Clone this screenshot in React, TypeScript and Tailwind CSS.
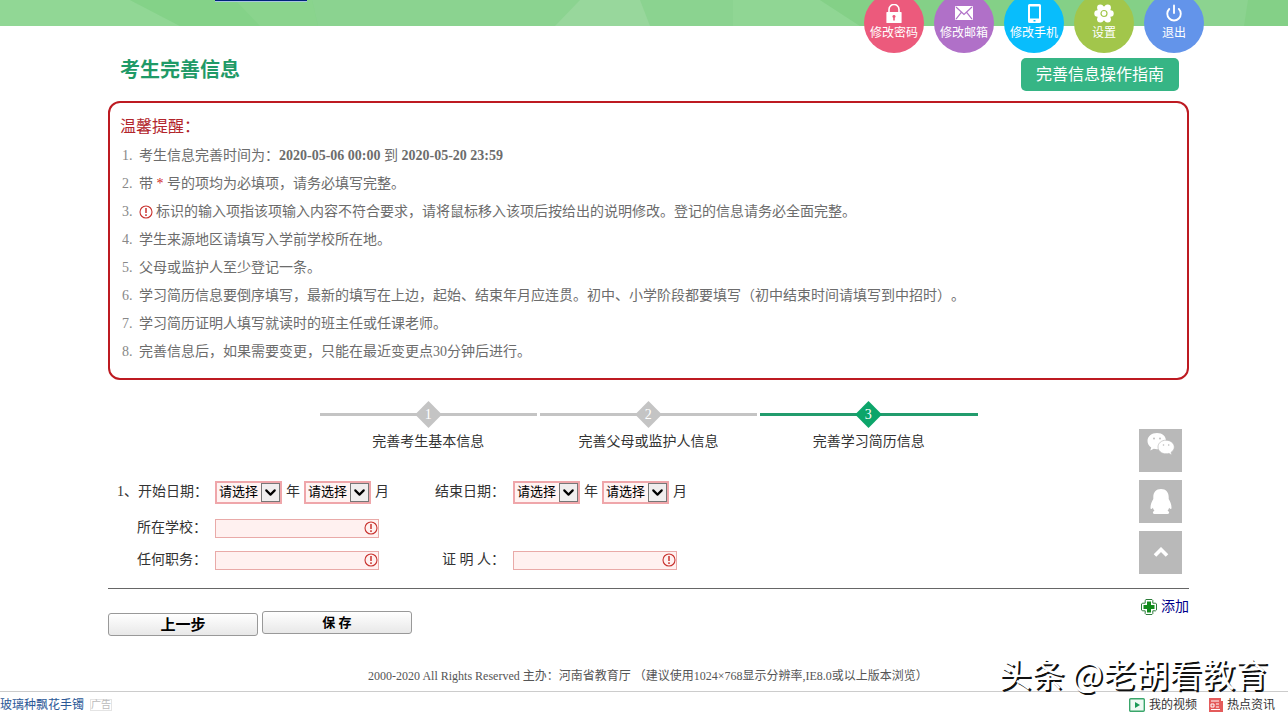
import React from 'react';
import { ChevronDown, Power } from 'lucide-react';

const steps = [
  { no: 1, label: '完善考生基本信息', active: false },
  { no: 2, label: '完善父母或监护人信息', active: false },
  { no: 3, label: '完善学习简历信息', active: true },
];

function BannerArt() {
  return (
    <svg className="absolute inset-0 h-full w-full" viewBox="0 0 1288 26" preserveAspectRatio="none">
      <rect width="1288" height="26" fill="#8bd390" />
      <path fill="#91d795" d="M0 0h130l50 26H0z" />
      <path fill="#84d288" d="M130 0h182l6 26H180z" />
      <path fill="#8ad48d" d="M235 0h77l6 26h-58z" />
      <path fill="#98d79c" d="M580 0h60l10 26h-95z" />
      <path fill="#90d694" d="M733 0h87l40 26H733z" />
      <path fill="#84d087" d="M820 0h468v26H860z" />
      <path fill="#8cd390" d="M1150 0h98l-4 26h-94z" />
    </svg>
  );
}

function LockIcon() {
  return (
    <svg width="16" height="19" viewBox="0 0 16 19" fill="none">
      <path d="M3 9V5.500a5 5 0 0 1 10 0V9" stroke="#fff" strokeWidth="1.600" />
      <path fillRule="evenodd" fill="#fff" d="M1 8h14a.6.6 0 0 1 .6.6v9.800a.6.6 0 0 1-.6.6H1a.6.6 0 0 1-.6-.6V8.600A.6.6 0 0 1 1 8zM8 11a1.500 1.500 0 0 0-.8 2.800V16.500h1.600v-2.700A1.500 1.500 0 0 0 8 11z" />
    </svg>
  );
}

function MailIcon() {
  return (
    <svg width="18" height="14" viewBox="0 0 18 14">
      <rect width="18" height="14" rx="1" fill="#fff" />
      <path d="M1 1l8 7.500L17 1M1 13.200l5.500-7M17 13.200l-5.500-7" fill="none" stroke="#b070c8" strokeWidth="1.200" />
    </svg>
  );
}

function PhoneIcon() {
  return (
    <svg width="13" height="19" viewBox="0 0 13 19">
      <path fillRule="evenodd" fill="#fff" d="M1.500 0h10A1.500 1.500 0 0 1 13 1.500v16a1.500 1.500 0 0 1-1.500 1.500h-10A1.500 1.500 0 0 1 0 17.500v-16A1.500 1.500 0 0 1 1.500 0zM2 2.500v12h9v-12zM5.500 16v1.500h2V16z" />
    </svg>
  );
}

function GearIcon() {
  return (
    <svg width="20" height="19" viewBox="0 0 20 19">
      <g fill="#fff">
        <circle cx="10" cy="9.500" r="7.200" />
        <circle cx="3.500" cy="9.500" r="3.200" />
        <circle cx="16.500" cy="9.500" r="3.200" />
        <circle cx="6.300" cy="3.700" r="3.200" />
        <circle cx="13.700" cy="3.700" r="3.200" />
        <circle cx="6.300" cy="15.300" r="3.200" />
        <circle cx="13.700" cy="15.300" r="3.200" />
      </g>
      <circle cx="10" cy="9.500" r="3" fill="none" stroke="#a2c64b" strokeWidth="1.200" />
    </svg>
  );
}

function WarnIcon() {
  return (
    <svg width="14" height="14" viewBox="0 0 14 14" fill="none" stroke="#c8322e">
      <circle cx="7" cy="7" r="6" strokeWidth="1.100" />
      <path d="M7 3v5" strokeWidth="1.500" />
      <path d="M7 9.300v1.700" strokeWidth="1.500" />
    </svg>
  );
}

function WechatIcon() {
  return (
    <svg width="28" height="23" viewBox="0 0 28 23">
      <path fill="#fff" d="M10 0C4.500 0 .5 3.500.5 8c0 2.800 1.500 5 3.700 6.500L3.300 17.500l3.500-1.700c1.200.3 2.500.5 3.900.4C13.500 16 19 13 19 8S15.500 0 10 0z" />
      <path fill="#fff" stroke="#b9b9b9" strokeWidth=".7" d="M19 7.200c-4.500 0-8 3-8 6.800s3.500 6.800 8 6.800c1 0 2-.2 2.900-.4l3 1.600-.8-2.700c2-1.300 3.200-3.200 3.200-5.300 0-3.800-3.800-6.800-8.300-6.800z" />
      <g fill="#bbb">
        <circle cx="7" cy="5.500" r=".9" />
        <circle cx="13" cy="5.500" r=".9" />
        <circle cx="16.500" cy="12" r=".8" />
        <circle cx="21.700" cy="12" r=".8" />
      </g>
    </svg>
  );
}

function QqIcon() {
  return (
    <svg width="22" height="25" viewBox="0 0 22 25">
      <path fill="#fff" d="M11 0C6 0 3.300 3.500 3.300 8v2C1.800 12.500.5 15.500.5 18.500c0 2 1 2 2.400.2.300 1.200.8 2.200 1.500 3-1 .5-1.500 1-1.500 2 0 .8 1 1.300 2.500 1.300h11.200c1.500 0 2.500-.5 2.500-1.300 0-1-.5-1.500-1.500-2 .7-.8 1.200-1.800 1.500-3 1.400 1.800 2.400 1.800 2.400-.2 0-3-1.300-6-2.800-8.500V8C18.700 3.500 16 0 11 0z" />
    </svg>
  );
}

function AddIcon() {
  return (
    <svg width="16" height="16" viewBox="0 0 16 16">
      <path fill="#fff" stroke="#2e7d3c" strokeLinejoin="round" d="M5 .5h6l.8.8v2.900h2.900l.8.8v6l-.8.8h-2.900v2.900l-.8.8H5l-.8-.8v-2.900H1.300l-.8-.8V5l.8-.8h2.900V1.300z" />
      <path fill="#128a1c" d="M6 2.500h4V6h3.500v4H10v3.500H6V10H2.500V6H6z" />
    </svg>
  );
}

const menu = [
  { label: '修改密码', color: 'bg-[#ec5a7c]', icon: <LockIcon /> },
  { label: '修改邮箱', color: 'bg-[#b070c8]', icon: <MailIcon /> },
  { label: '修改手机', color: 'bg-[#08bdfc]', icon: <PhoneIcon /> },
  { label: '设置', color: 'bg-[#a2c64b]', icon: <GearIcon /> },
  { label: '退出', color: 'bg-[#6394ea]', icon: <Power size={18} strokeWidth={2.5} /> },
];

function PickSelect({ label }: { label: string }) {
  return (
    <span className="relative inline-flex">
      <select
        aria-label={label}
        className="h-[23px] w-[67px] appearance-none border-2 border-[#efa6aa] bg-[#fff3f2] pl-0.5 text-[13px] leading-4 text-black"
      >
        <option>请选择</option>
      </select>
      <span className="pointer-events-none absolute top-0.5 right-0.5 flex h-[19px] w-[19px] items-center justify-center border border-[#777] bg-[#f0eeee]">
        <ChevronDown className="shrink-0" size={17} strokeWidth={3} color="#000" />
      </span>
    </span>
  );
}

function DateField({ prefix, label }: { prefix?: string; label: string }) {
  return (
    <div className="flex h-6 items-center">
      <span className="mr-2 flex w-[90px] justify-between whitespace-nowrap">
        <span>{prefix}</span>
        <span>{label}：</span>
      </span>
      <PickSelect label={label + '年'} />
      <span className="mx-1">年</span>
      <PickSelect label={label + '月'} />
      <span className="ml-1">月</span>
    </div>
  );
}

function TextField({ id, label }: { id: string; label: string }) {
  return (
    <div className="flex h-5 items-center">
      <label htmlFor={id} className="mr-2 w-[90px] text-right">{label}：</label>
      <span className="relative inline-flex">
        <input id={id} type="text" className="h-[19px] w-[164px] border border-[#e9aaa8] bg-[#fff1f0] px-1" />
        <span className="pointer-events-none absolute top-0.5 right-px">
          <WarnIcon />
        </span>
      </span>
    </div>
  );
}

export default function App() {
  return (
    <div className="relative bg-white font-['Liberation_Serif','Noto_Sans_CJK_SC',serif] text-sm text-[#333]" lang="zh-CN">
      {/* Top banner */}
      <header className="relative z-10 flex h-[26px] items-start justify-between pr-[84px] pl-[215px]">
        <BannerArt />
        <div className="relative h-0.5 w-[92px] border-b border-[#a9c5df] bg-[#00237c]" />
        <nav className="relative -mt-[7px] flex gap-2.5">
          {menu.map((item) => (
            <a
              key={item.label}
              href="#"
              className={`flex h-[60px] w-[60px] flex-col items-center rounded-full pt-2.5 text-xs text-white ${item.color}`}
            >
              <span className="flex h-5 items-center">{item.icon}</span>
              <span className="whitespace-nowrap leading-5">{item.label}</span>
            </a>
          ))}
        </nav>
      </header>

      <main className="pr-[99px] pl-[108px]">
        <div className="flex h-[75px] items-end justify-between pr-2.5 pb-2.5 pl-3">
          <h1 className="pb-[7px] text-xl leading-7 font-bold text-[#1f9a67]">考生完善信息</h1>
          <button type="button" className="h-[33px] rounded-[5px] bg-[#36b585] px-[15px] text-base leading-8 text-white">
            完善信息操作指南
          </button>
        </div>

        <section className="rounded-xl border-2 border-[#bd1a21] pt-2.5 pb-3 pl-2.5 text-[#6c6c6c]">
          <h2 className="mb-px text-base leading-7 text-[#b2252b]">温馨提醒：</h2>
          <ol className="list-decimal pl-4 leading-7 [text-spacing-trim:space-all] marker:text-[#888] *:pl-[3px]">
            <li>考生信息完善时间为：<b>2020-05-06 00:00</b> 到 <b>2020-05-20 23:59</b></li>
            <li>带 <span className="text-[#d01c1c]">*</span> 号的项均为必填项，请务必填写完整。</li>
            <li>
              <span className="mr-[3px] inline-block align-text-bottom"><WarnIcon /></span>
              标识的输入项指该项输入内容不符合要求，请将鼠标移入该项后按给出的说明修改。登记的信息请务必全面完整。
            </li>
            <li>学生来源地区请填写入学前学校所在地。</li>
            <li>父母或监护人至少登记一条。</li>
            <li>学习简历信息要倒序填写，最新的填写在上边，起始、结束年月应连贯。初中、小学阶段都要填写（初中结束时间请填写到中招时）。</li>
            <li>学习简历证明人填写就读时的班主任或任课老师。</li>
            <li>完善信息后，如果需要变更，只能在最近变更点30分钟后进行。</li>
          </ol>
        </section>

        {/* Steps */}
        <ol className="mx-auto mt-5 grid w-[658px] grid-cols-3 gap-[3px]">
          {steps.map((s) => (
            <li key={s.no} className="flex flex-col items-center">
              <div className="flex h-7 w-full items-center">
                <span className={`h-[3px] flex-1 ${s.active ? 'bg-[#229c6d]' : 'bg-[#c4c4c4]'}`} />
                <span className={`flex h-[19px] w-[19px] rotate-45 items-center justify-center ${s.active ? 'bg-[#0ca56a]' : 'bg-[#c4c4c4]'}`}>
                  <span className="-rotate-45 leading-4 text-white">{s.no}</span>
                </span>
                <span className={`h-[3px] flex-1 ${s.active ? 'bg-[#229c6d]' : 'bg-[#c4c4c4]'}`} />
              </div>
              <span className="mt-0.5 leading-6">{s.label}</span>
            </li>
          ))}
        </ol>

        {/* Resume form */}
        <form>
          <div className="mt-[26px] grid grid-cols-[298px_1fr] pl-[9px]">
            <DateField prefix="1、" label="开始日期" />
            <DateField label="结束日期" />
            <div className="col-span-2 mt-3.5">
              <TextField id="school" label="所在学校" />
            </div>
            <div className="mt-3">
              <TextField id="duty" label="任何职务" />
            </div>
            <div className="mt-3">
              <TextField id="witness" label="证 明 人" />
            </div>
          </div>

          <hr className="mt-[18px] border-[#666]" />

          <div className="flex items-start justify-between">
            <div className="mt-[22px] flex gap-1 text-black">
              <button type="button" className="mt-0.5 h-[23px] w-[150px] rounded-[3px] border border-[#999] bg-linear-to-b from-white to-[#e8e8e8] text-[15px] leading-5 font-bold">
                上一步
              </button>
              <button type="submit" className="h-[23px] w-[150px] rounded-[3px] border border-[#999] bg-linear-to-b from-white to-[#e8e8e8] text-[13px] leading-5 font-bold">
                保 存
              </button>
            </div>
            <a href="#" className="mt-2 flex items-center gap-1 leading-5 text-[#00008b]">
              <AddIcon />
              添加
            </a>
          </div>
        </form>
      </main>

      <footer className="mt-7 pb-[3px] pl-2 text-center text-xs leading-6 text-[#555]">
        2000-2020 All Rights Reserved 主办：河南省教育厅 （建议使用1024×768显示分辨率,IE8.0或以上版本浏览）
      </footer>

      {/* Browser status bar */}
      <div className="flex items-center border-t border-[#ccc] pt-[5px] pr-[13px] text-xs leading-4">
        <a href="#" className="text-[#2b5796]">玻璃种飘花手镯</a>
        <span className="ml-1.5 border border-[#e4e4e4] text-[10px] leading-[10px] text-[#bbb]">广告</span>
        <a href="#" className="ml-auto flex items-center gap-1">
          <svg width="16" height="14" viewBox="0 0 16 14">
            <rect x=".7" y=".7" width="14.600" height="12.600" rx="1" fill="#effaf3" stroke="#3aa66b" strokeWidth="1.400" />
            <path d="M6 4l5 3-5 3z" fill="#1b9a57" />
          </svg>
          我的视频
        </a>
        <a href="#" className="ml-3 flex items-center gap-1">
          <svg width="14" height="14" viewBox="0 0 14 14">
            <path d="M0 0h12v3h2v11H0z" fill="#e45b5b" />
            <path d="M2 3h8M2 6h3v3H2zM7 6h3M7 9h3M2 11.500h9" fill="none" stroke="#fff" />
          </svg>
          热点资讯
        </a>
      </div>

      {/* Floating shortcuts */}
      <aside className="absolute top-[429px] right-[106px] flex flex-col gap-2">
        <button type="button" aria-label="微信" className="flex h-[43px] w-[43px] justify-center bg-[#b9b9b9] pt-1">
          <WechatIcon />
        </button>
        <button type="button" aria-label="QQ" className="flex h-[43px] w-[43px] items-center justify-center bg-[#b9b9b9]">
          <QqIcon />
        </button>
        <button type="button" aria-label="返回顶部" className="flex h-[43px] w-[43px] items-center justify-center bg-[#b9b9b9]">
          <svg width="16" height="11" viewBox="0 0 16 11" fill="none">
            <path d="M2 8.500l6-6 6 6" stroke="#fff" strokeWidth="3.600" />
          </svg>
        </button>
      </aside>

      <div className="pointer-events-none absolute right-5 bottom-6 font-['Noto_Sans_CJK_SC',sans-serif] text-[33px] leading-8 whitespace-nowrap text-white [text-shadow:2px_2px_0_#111]">
        头条 @老胡看教育
      </div>
    </div>
  );
}
